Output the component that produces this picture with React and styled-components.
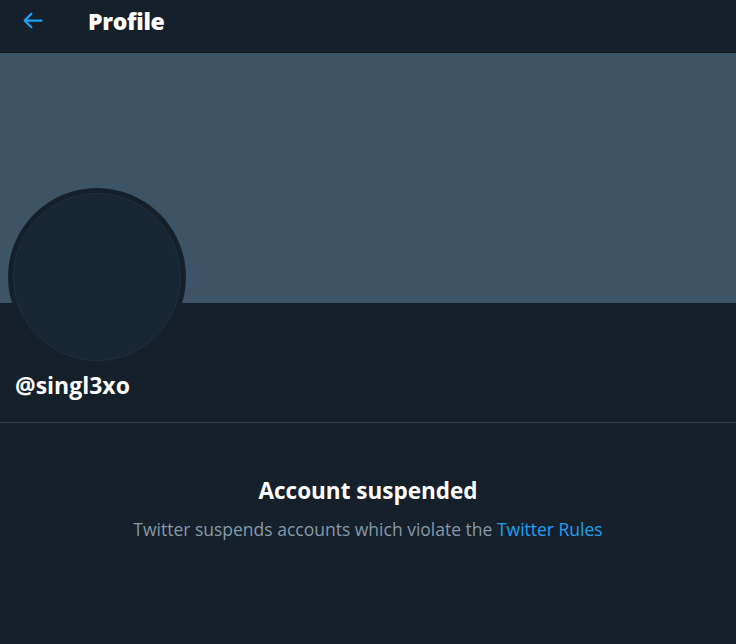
import React from "react";
import styled, { createGlobalStyle } from "styled-components";

const GlobalStyle = createGlobalStyle`
  html, body {
    margin: 0;
    padding: 0;
    background: #15202b;
  }
  body {
    font-family: "Open Sans", "Noto Sans", sans-serif;
  }
`;

const BackArrow = () => (
  <svg viewBox="0 0 24 24" width="27" height="27" fill="#1da1f2">
    <path d="M20 11H7.414l4.293-4.293c.39-.39.39-1.023 0-1.414s-1.023-.39-1.414 0l-6 6c-.39.39-.39 1.023 0 1.414l6 6c.195.195.45.293.707.293s.512-.098.707-.293c.39-.39.39-1.023 0-1.414L7.414 13H20c.553 0 1-.447 1-1s-.447-1-1-1z" />
  </svg>
);

const App = () => {
  return (
    <Page>
      <GlobalStyle />
      <Header>
        <BackButton>
          <BackArrow />
        </BackButton>
        <Title>Profile</Title>
      </Header>
      <Banner />
      <ProfileInfo>
        <Avatar>
          <AvatarInner />
        </Avatar>
        <Handle>@singl3xo</Handle>
      </ProfileInfo>
      <Suspended>
        <SuspendedTitle>Account suspended</SuspendedTitle>
        <SuspendedText>
          Twitter suspends accounts which violate the{" "}
          <a href="#rules">Twitter Rules</a>
        </SuspendedText>
      </Suspended>
    </Page>
  );
};

const Page = styled.div`
  width: 736px;
  min-height: 644px;
  background: #15202b;
  color: #fff;
  overflow: hidden;
`;

const Header = styled.div`
  height: 53px;
  display: flex;
  align-items: center;
  padding: 0 16px 0 19px;
  border-bottom: 1px solid #10171e;
  box-sizing: border-box;
  gap: 42px;
`;

const BackButton = styled.div`
  display: flex;
  align-items: center;
  margin-top: -11px;
`;

const Title = styled.div`
  font-size: 23px;
  font-weight: 800;
  margin-top: -11px;
  letter-spacing: -0.3px;
`;

const Banner = styled.div`
  height: 250px;
  background: #3d5466;
`;

const ProfileInfo = styled.div`
  display: flex;
  flex-direction: column;
  padding: 0 15px;
  height: 120px;
  box-sizing: border-box;
  border-bottom: 1px solid #38444d;
`;

const Avatar = styled.div`
  width: 178px;
  height: 178px;
  margin: -115px 0 0 -7px;
  border-radius: 50%;
  background: #15202b;
  display: flex;
  align-items: center;
  justify-content: center;
  flex-shrink: 0;
`;

const AvatarInner = styled.div`
  width: 168px;
  height: 168px;
  border-radius: 50%;
  background: #192734;
  border: 1px solid #22303c;
  box-sizing: border-box;
`;

const Handle = styled.div`
  margin-top: 3px;
  font-size: 23px;
  font-weight: 700;
`;

const Suspended = styled.div`
  display: flex;
  flex-direction: column;
  align-items: center;
  padding-top: 52px;
`;

const SuspendedTitle = styled.div`
  font-size: 22.5px;
  font-weight: 700;
`;

const SuspendedText = styled.div`
  margin-top: 11px;
  font-size: 17.5px;
  color: #8899a6;
  a {
    color: #1da1f2;
    text-decoration: none;
  }
`;

export default App;
